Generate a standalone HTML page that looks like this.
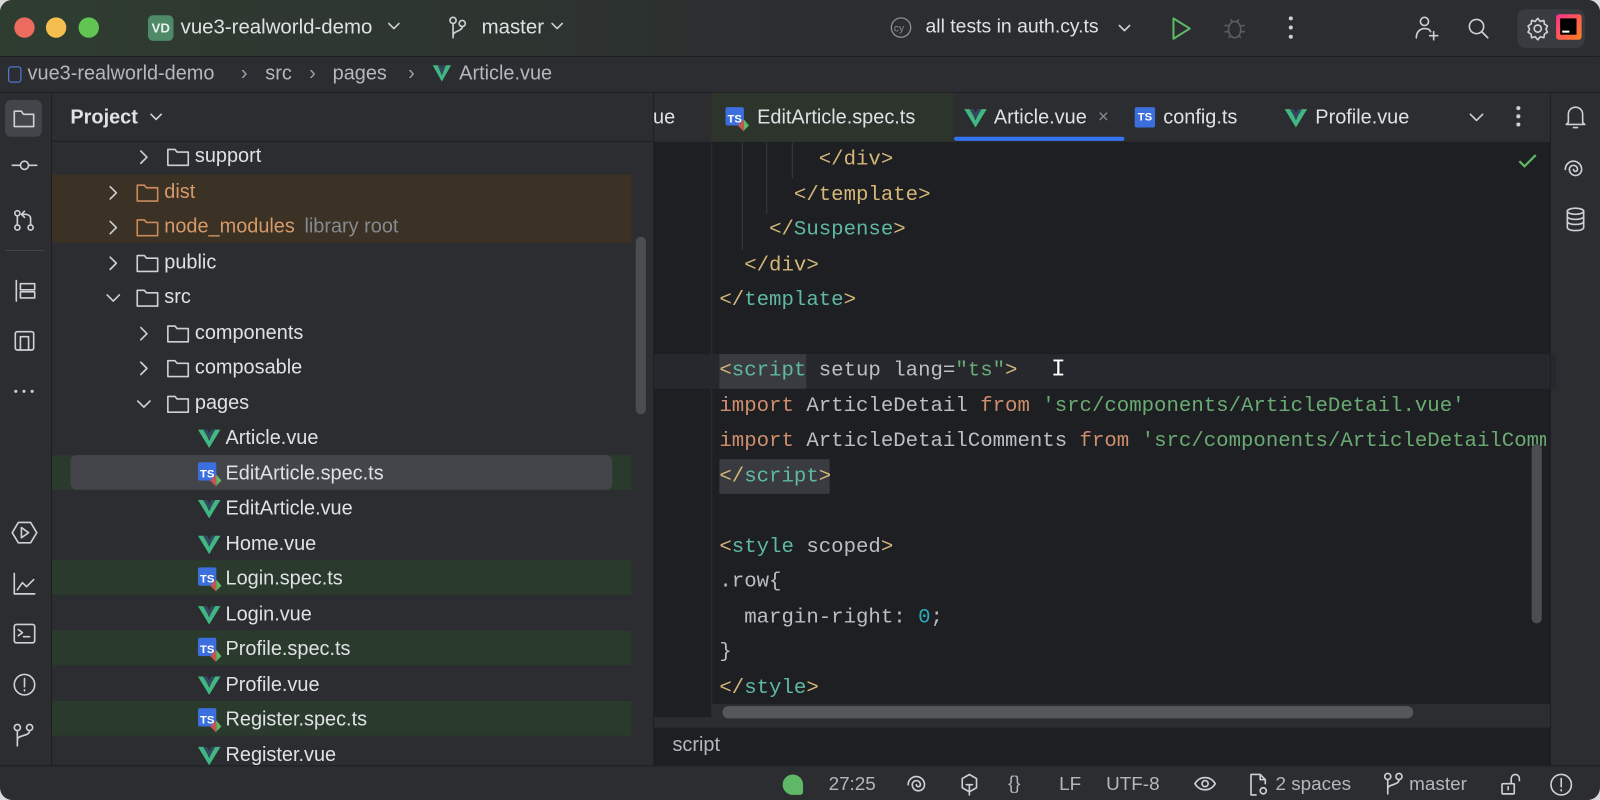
<!DOCTYPE html>
<html><head><meta charset="utf-8">
<style>
html,body{margin:0;padding:0;width:1600px;height:800px;overflow:hidden;background:#d9d9d9;}
#s{position:absolute;left:0;top:0;width:1568px;height:784px;transform:scale(1.0204);transform-origin:0 0;}
#w{position:absolute;left:0;top:0;width:1568px;height:784px;background:#2b2d30;border-radius:12px;overflow:hidden;font-family:"Liberation Sans",sans-serif;color:#dfe1e5;font-size:19.5px;}
.a{position:absolute;white-space:nowrap;}
.t{line-height:34px;}
.code{font-family:"Liberation Mono",monospace;font-size:20.3px;color:#bcbec4;line-height:34.5px;white-space:pre;}
.code div{white-space:pre}
.y{color:#d5b778}.g{color:#5fb9a3}.o{color:#cf8e6d}.s{color:#6aab73}.n{color:#2aacb8}
svg{position:absolute;overflow:visible}
.ic{stroke:#ced0d6;fill:none;stroke-width:1.6;stroke-linecap:round;stroke-linejoin:round}
</style></head><body>
<div id="s"><div id="w">
<!-- title bar -->
<div class="a" style="left:0;top:0;width:1568px;height:55px;background:linear-gradient(90deg,#2f3d31 0%,#2e3630 25%,#2b2d30 55%);border-bottom:1px solid #1e1f22"></div>
<div class="a" style="left:14px;top:17px;width:20px;height:20px;border-radius:50%;background:#ed6a5e"></div>
<div class="a" style="left:45px;top:17px;width:20px;height:20px;border-radius:50%;background:#f5bf4f"></div>
<div class="a" style="left:77px;top:17px;width:20px;height:20px;border-radius:50%;background:#61c554"></div>
<div class="a" style="left:145px;top:15px;width:25px;height:25px;border-radius:5px;background:#4f8a68;color:#e8f0ea;font-size:13px;font-weight:bold;text-align:center;line-height:25px">VD</div>
<div class="a t" style="left:177px;top:10px;font-size:20px;">vue3-realworld-demo</div>
<svg style="left:380px;top:22px" width="12" height="8"><path class="ic" d="M1 1l5 5 5-5"/></svg>
<svg style="left:440px;top:16px" width="16" height="24"><circle class="ic" cx="4" cy="4" r="3"/><circle class="ic" cx="13" cy="7" r="3"/><path class="ic" d="M4 7v14M13 10c0 5-9 4-9 9"/></svg>
<div class="a t" style="left:472px;top:10px;font-size:20px;">master</div>
<svg style="left:540px;top:22px" width="12" height="8"><path class="ic" d="M1 1l5 5 5-5"/></svg>
<svg style="left:872px;top:16px" width="22" height="22"><circle cx="11" cy="11" r="9.5" stroke="#8c8f94" fill="none" stroke-width="1.3"/><text x="4" y="15" font-size="10" fill="#8c8f94" font-family="Liberation Sans">cy</text></svg>
<div class="a t" style="left:907px;top:10px;font-size:19px;">all tests in auth.cy.ts</div>
<svg style="left:1096px;top:24px" width="12" height="8"><path class="ic" d="M1 1l5 5 5-5"/></svg>
<svg style="left:1147px;top:16px" width="22" height="24"><path d="M3 2l16 10-16 10z" stroke="#5fb865" fill="none" stroke-width="2" stroke-linejoin="round"/></svg>
<svg style="left:1198px;top:16px" width="24" height="24"><ellipse cx="12" cy="13" rx="6" ry="8" stroke="#5a5d62" fill="none" stroke-width="1.6"/><path d="M2 9h4M18 9h4M2 15h4M18 15h4M8 3l2 3M16 3l-2 3M6 21l2-2M18 21l-2-2" stroke="#5a5d62" stroke-width="1.6"/></svg>
<div class="a" style="left:1263px;top:16px;width:4px;height:4px;border-radius:2px;background:#ced0d6;box-shadow:0 9px 0 #ced0d6,0 18px 0 #ced0d6"></div>
<svg style="left:1385px;top:15px" width="26" height="26"><circle class="ic" cx="11" cy="6" r="4"/><path class="ic" d="M3 22c0-6 4-9 8-9s5 1 6 3M16 20h8M20 16v8"/></svg>
<svg style="left:1438px;top:17px" width="22" height="22"><circle class="ic" cx="9" cy="9" r="7"/><path class="ic" d="M14 14l6 6"/></svg>
<div class="a" style="left:1487px;top:9px;width:66px;height:38px;border-radius:8px;background:#393b40"></div>
<svg style="left:1495px;top:16px" width="24" height="24"><circle class="ic" cx="12" cy="12" r="3.5"/><path class="ic" d="M12 2l2.5 3 3.5-1 .5 3.5 3 2-1.5 3 1.5 3-3 2-.5 3.5-3.5-1-2.5 3-2.5-3-3.5 1-.5-3.5-3-2 1.5-3-1.5-3 3-2 .5-3.5 3.5 1z"/></svg>
<div class="a" style="left:1525px;top:14px;width:25px;height:25px;border-radius:3px;background:linear-gradient(135deg,#ff318c,#ff6a3d 70%,#fc801d)"></div>
<div class="a" style="left:1529px;top:18px;width:16px;height:16px;background:#000"></div>
<div class="a" style="left:1531px;top:30px;width:7px;height:2px;background:#fff"></div>
<!-- breadcrumb -->
<div class="a" style="left:0;top:56px;width:1568px;height:34px;background:#2b2d30;border-bottom:1px solid #1e1f22"></div>
<div class="a" style="left:8px;top:65px;width:11px;height:14px;border:1.6px solid #548af7;border-radius:3px"></div>
<div class="a t" style="left:27px;top:55px;color:#b5b7bd">vue3-realworld-demo</div>
<div class="a t" style="left:236px;top:55px;color:#9da0a8">›</div>
<div class="a t" style="left:260px;top:55px;color:#b5b7bd">src</div>
<div class="a t" style="left:303px;top:55px;color:#9da0a8">›</div>
<div class="a t" style="left:326px;top:55px;color:#b5b7bd">pages</div>
<div class="a t" style="left:400px;top:55px;color:#9da0a8">›</div>
<svg style="left:423px;top:63px" width="20" height="18"><path d="M1 1h5l4 10 4-10h5L10 17z" fill="#41b883"/><path d="M6 1h3l1 3 1-3h3l-4 10z" fill="#34495e"/></svg>
<div class="a t" style="left:450px;top:55px;color:#b5b7bd">Article.vue</div>
<!-- left strip -->
<div class="a" style="left:50px;top:91px;width:1px;height:660px;background:#1e1f22"></div>
<div class="a" style="left:5px;top:98px;width:36px;height:36px;border-radius:6px;background:#43454a"></div>
<svg style="left:12px;top:106px" width="24" height="20"><path class="ic" d="M2 3h7l2 3h10v12H2z"/></svg>
<svg style="left:10px;top:155px" width="28" height="14"><circle class="ic" cx="14" cy="7" r="4"/><path class="ic" d="M2 7h8M18 7h8"/></svg>
<svg style="left:13px;top:205px" width="22" height="22"><circle class="ic" cx="4" cy="4" r="2.5"/><circle class="ic" cx="4" cy="18" r="2.5"/><circle class="ic" cx="17" cy="18" r="2.5"/><path class="ic" d="M4 7v8M17 15V9c0-2-2-4-5-4H9M11 2L8 5l3 3"/></svg>
<div class="a" style="left:5px;top:245px;width:38px;height:1px;background:#43454a"></div>
<svg style="left:14px;top:273px" width="22" height="24"><path class="ic" d="M2 2v20M6 5h14v6H6zM6 13h14v6H6z"/></svg>
<svg style="left:13px;top:323px" width="22" height="22"><rect class="ic" x="2" y="2" width="18" height="18" rx="2"/><path class="ic" d="M7 20V7h8v13"/></svg>
<div class="a" style="left:14px;top:382px;width:3px;height:3px;border-radius:2px;background:#ced0d6;box-shadow:8px 0 0 #ced0d6,16px 0 0 #ced0d6"></div>
<svg style="left:11px;top:510px" width="26" height="24"><path class="ic" d="M7 2h12l6 10-6 10H7L1 12z"/><path class="ic" d="M10 7l7 5-7 5z"/></svg>
<svg style="left:12px;top:560px" width="24" height="24"><path class="ic" d="M2 2v20h20M5 18l5-7 4 4 7-7"/></svg>
<svg style="left:12px;top:610px" width="24" height="22"><rect class="ic" x="2" y="2" width="20" height="18" rx="2"/><path class="ic" d="M6 7l4 3-4 3M11 14h6"/></svg>
<svg style="left:12px;top:659px" width="24" height="24"><circle class="ic" cx="12" cy="12" r="10"/><path class="ic" d="M12 6v8M12 17v1"/></svg>
<svg style="left:13px;top:709px" width="22" height="24"><circle class="ic" cx="4" cy="4" r="3"/><circle class="ic" cx="16" cy="4" r="3"/><path class="ic" d="M4 7v15M16 7c0 6-12 4-12 9"/></svg>
<!-- project panel -->
<div class="a t" style="left:69px;top:98px;font-weight:bold;font-size:19.5px">Project</div>
<svg style="left:147px;top:111px" width="12" height="8"><path class="ic" d="M1 1l5 5 5-5"/></svg>
<div class="a" style="left:51px;top:138px;width:590px;height:1px;background:#1e1f22"></div>
<div class="a" style="left:640px;top:91px;width:1px;height:660px;background:#1e1f22"></div>
<div class="a" style="left:51px;top:171px;width:568px;height:67px;background:#3b3124"></div>
<div class="a" style="left:51px;top:446px;width:568px;height:34px;background:#2a3a2c"></div>
<div class="a" style="left:69px;top:446px;width:531px;height:34px;border-radius:6px;background:#43454a"></div>
<div class="a" style="left:51px;top:549px;width:568px;height:34px;background:#2a3a2c"></div>
<div class="a" style="left:51px;top:618px;width:568px;height:34px;background:#2a3a2c"></div>
<div class="a" style="left:51px;top:687px;width:568px;height:34px;background:#2a3a2c"></div>
<div class="a" style="left:623px;top:232px;width:10px;height:174px;border-radius:5px;background:#4b4d51"></div>
<div id="tree"></div>
<!-- editor -->
<div class="a" style="left:641px;top:91px;width:878px;height:48px;background:#2b2d30"></div>
<div class="a" style="left:641px;top:139px;width:878px;height:1px;background:#1e1f22"></div>
<div class="a" style="left:697px;top:91px;width:238px;height:48px;background:#2c342c"></div>
<div class="a t" style="left:640px;top:98px">ue</div>
<div class="a t" style="left:742px;top:98px">EditArticle.spec.ts</div>
<div class="a t" style="left:974px;top:98px">Article.vue</div>
<div class="a t" style="left:1076px;top:97px;color:#868a91;font-size:18px">×</div>
<div class="a" style="left:935px;top:134px;width:167px;height:4px;background:#3574f0;border-radius:2px"></div>
<div class="a t" style="left:1140px;top:98px">config.ts</div>
<div class="a t" style="left:1289px;top:98px">Profile.vue</div>
<svg style="left:1440px;top:111px" width="14" height="8"><path class="ic" d="M1 1l6 6 6-6"/></svg>
<div class="a" style="left:1486px;top:104px;width:4px;height:4px;border-radius:2px;background:#ced0d6;box-shadow:0 8px 0 #ced0d6,0 16px 0 #ced0d6"></div>
<div id="tabicons"></div>
<div class="a" style="left:641px;top:140px;width:878px;height:563px;background:#1e1f22"></div>
<div class="a" style="left:697px;top:140px;width:1px;height:563px;background:#2b2d30"></div>
<div class="a" style="left:641px;top:347px;width:884px;height:34px;background:#26282e"></div>
<div class="a" style="left:705px;top:347px;width:85px;height:34px;background:#393b40"></div>
<div class="a" style="left:705px;top:450px;width:108px;height:34px;background:#393b40"></div>
<div class="a" style="left:727px;top:140px;width:1px;height:105px;background:#393b40"></div>
<div class="a" style="left:751px;top:140px;width:1px;height:70px;background:#393b40"></div>
<div class="a" style="left:776px;top:140px;width:1px;height:35px;background:#393b40"></div>
<div class="a code" style="left:705px;top:140px;width:810px;overflow:hidden"><div>        <span class="y">&lt;/div&gt;</span></div><div>      <span class="y">&lt;/template&gt;</span></div><div>    <span class="y">&lt;/</span><span class="g">Suspense</span><span class="y">&gt;</span></div><div>  <span class="y">&lt;/div&gt;</span></div><div><span class="y">&lt;/</span><span class="g">template</span><span class="y">&gt;</span></div><div> </div><div><span class="y">&lt;</span><span class="g">script</span> setup lang=<span class="s">"ts"</span><span class="y">&gt;</span></div><div><span class="o">import</span> ArticleDetail <span class="o">from</span> <span class="s">'src/components/ArticleDetail.vue'</span></div><div><span class="o">import</span> ArticleDetailComments <span class="o">from</span> <span class="s">'src/components/ArticleDetailComments.vue'</span></div><div><span class="y">&lt;/</span><span class="g">script</span><span class="y">&gt;</span></div><div> </div><div><span class="y">&lt;</span><span class="g">style</span> scoped<span class="y">&gt;</span></div><div>.row{</div><div>  margin-right: <span class="n">0</span>;</div><div>}</div><div><span class="y">&lt;/</span><span class="g">style</span><span class="y">&gt;</span></div></div>
<div class="a" style="left:1030px;top:349px;font-family:'Liberation Mono';font-size:24px;color:#fff;text-shadow:0 0 1px #000">I</div>
<svg style="left:1487px;top:150px" width="20" height="16"><path d="M2 8l5 5 11-11" stroke="#5fb865" stroke-width="2.2" fill="none"/></svg>
<div class="a" style="left:1501px;top:435px;width:10px;height:176px;border-radius:5px;background:#4b4d51"></div>
<div class="a" style="left:697px;top:690px;width:822px;height:22px;background:#2b2d30"></div>
<div class="a" style="left:708px;top:692px;width:677px;height:12px;border-radius:6px;background:#55575b"></div>
<div class="a" style="left:641px;top:712px;width:878px;height:37px;background:#1e1f22;border-top:1px solid #2b2d30"></div>
<div class="a t" style="left:659px;top:713px;color:#b5b7bd">script</div>
<!-- right strip -->
<div class="a" style="left:1519px;top:91px;width:1px;height:660px;background:#1e1f22"></div>
<svg style="left:1533px;top:102px" width="22" height="26"><path class="ic" d="M4 18V10a7 7 0 0114 0v8l2 2H2zM9 23h4"/></svg>
<svg style="left:1533px;top:155px" width="22" height="22"><path class="ic" d="M11 11m-2 0a2 2 0 104 0a4 4 0 10-8 0a6 6 0 1012 0a8 8 0 10-16 0"/></svg>
<svg style="left:1534px;top:203px" width="20" height="24"><ellipse class="ic" cx="10" cy="4" rx="8" ry="3"/><path class="ic" d="M2 4v16c0 4 16 4 16 0V4M2 9c0 4 16 4 16 0M2 14c0 4 16 4 16 0"/></svg>
<!-- status bar -->
<div class="a" style="left:0;top:750px;width:1568px;height:1px;background:#1e1f22"></div>
<div class="a" style="left:767px;top:759px;width:20px;height:20px;border-radius:10px 10px 3px 10px;background:#5fb865"></div>
<div class="a t" style="left:812px;top:751px;color:#b5b7bd;font-size:18.5px">27:25</div>
<svg style="left:890px;top:759px" width="20" height="20"><path class="ic" d="M10 10m-2 0a2 2 0 104 0a4 4 0 10-8 0a6 6 0 1012 0a8 8 0 10-16 0"/></svg>
<svg style="left:940px;top:757px" width="20" height="24"><path class="ic" d="M10 2l7 4v9l-7 4-7-4V6z"/><path class="ic" d="M7 12h6M10 12v10"/></svg>
<div class="a t" style="left:988px;top:750px;color:#b5b7bd;font-size:18px">{}</div>
<div class="a t" style="left:1038px;top:751px;color:#b5b7bd;font-size:18.5px">LF</div>
<div class="a t" style="left:1084px;top:751px;color:#b5b7bd;font-size:18.5px">UTF-8</div>
<svg style="left:1170px;top:760px" width="22" height="16"><path class="ic" d="M1 8c5-8 15-8 20 0-5 8-15 8-20 0z"/><circle class="ic" cx="11" cy="8" r="3"/></svg>
<svg style="left:1222px;top:757px" width="24" height="26"><path class="ic" d="M13 2H4v20h5M13 2l5 5v4M13 2v5h5"/><circle class="ic" cx="16" cy="18" r="3"/></svg>
<div class="a t" style="left:1250px;top:751px;color:#b5b7bd;font-size:18.5px">2 spaces</div>
<svg style="left:1356px;top:757px" width="20" height="24"><circle class="ic" cx="4" cy="4" r="3"/><circle class="ic" cx="15" cy="4" r="3"/><path class="ic" d="M4 7v14M15 7c0 6-11 4-11 9"/></svg>
<div class="a t" style="left:1381px;top:751px;color:#b5b7bd;font-size:18.5px">master</div>
<svg style="left:1470px;top:757px" width="22" height="24"><rect class="ic" x="2" y="11" width="12" height="10" rx="1"/><path class="ic" d="M11 11V6a4 4 0 018 0v2M8 14v3"/></svg>
<svg style="left:1518px;top:757px" width="24" height="24"><circle class="ic" cx="12" cy="12" r="10"/><path class="ic" d="M12 6v8M12 17v1"/></svg>
</div></div>
<script>
var rows=[
[0,0,'f','support',0],[1,1,'f','dist','o'],[2,1,'f','node_modules','o'],[3,1,'f','public',0],[4,1,'fo','src',0],
[5,0,'f','components',0],[6,0,'f','composable',0],[7,0,'fo','pages',0],
[8,2,'v','Article.vue'],[9,2,'t','EditArticle.spec.ts'],[10,2,'v','EditArticle.vue'],[11,2,'v','Home.vue'],
[12,2,'t','Login.spec.ts'],[13,2,'v','Login.vue'],[14,2,'t','Profile.spec.ts'],[15,2,'v','Profile.vue'],
[16,2,'t','Register.spec.ts'],[17,2,'v','Register.vue']];
var h='';
var V='<svg width="22" height="19"><path d="M0 1h6l5 11 5-11h6L11 19z" fill="#41b883"/><path d="M5 1h4l2 4 2-4h4l-6 10z" fill="#34495e"/></svg>';
var T='<svg width="24" height="24"><rect x="0" y="1" width="18" height="18" rx="2" fill="#3d6ede"/><text x="2" y="16" font-size="11" font-weight="bold" fill="#fff" font-family="Liberation Sans">TS</text><path d="M12 19l6-6v12z" fill="#c75450"/><path d="M18 13l5 6-5 5z" fill="#5fb865"/></svg>';
rows.forEach(function(r){
 var y=136+r[0]*34.5;
 var lvl=r[1];
 var chev,ix,tx;
 if(r[2]=='v'||r[2]=='t'){ix=194;tx=221;}
 else{ var base=(lvl==1)?104:134; chev=base; ix=base+29; tx=base+57;}
 var col=r[4]=='o'?'#d69a6a':'#dfe1e5';
 var ic=r[4]=='o'?'#c98a5c':'#ced0d6';
 if(chev!==undefined){
  var p=(r[2]=='fo')?'M1 4l6 6 6-6':'M4 1l6 6-6 6';
  h+='<svg style="left:'+chev+'px;top:'+(y+11)+'px" width="14" height="14"><path d="'+p+'" stroke="#ced0d6" stroke-width="1.6" fill="none" stroke-linecap="round" stroke-linejoin="round"/></svg>';
  h+='<svg style="left:'+ix+'px;top:'+(y+8)+'px" width="24" height="20"><path d="M1.5 2.5h7l2 2.5h11v13h-20z" stroke="'+ic+'" stroke-width="1.6" fill="none" stroke-linejoin="round"/></svg>';
 } else {
  h+='<div class="a" style="left:'+ix+'px;top:'+(y+(r[2]=='v'?8:5))+'px;width:26px;height:26px">'+(r[2]=='v'?V:T)+'</div>';
 }
 h+='<div class="a t" style="left:'+tx+'px;top:'+y+'px;color:'+col+'">'+r[3]+(r[3]=='node_modules'?' <span style="color:#868a91;margin-left:4px">library root</span>':'')+'</div>';
});
document.getElementById('tree').innerHTML=h;
var tb='';
tb+='<div class="a" style="left:711px;top:104px;width:26px;height:26px">'+T+'</div>';
tb+='<div class="a" style="left:1112px;top:105px;width:20px;height:20px;background:#3d6ede;border-radius:2px;color:#fff;font-size:11px;font-weight:bold;line-height:20px;text-align:center">TS</div>';
tb+='<div class="a" style="left:945px;top:106px">'+V+'</div>';
tb+='<div class="a" style="left:1259px;top:106px">'+V+'</div>';
document.getElementById('tabicons').innerHTML=tb;
</script>
</body></html>
